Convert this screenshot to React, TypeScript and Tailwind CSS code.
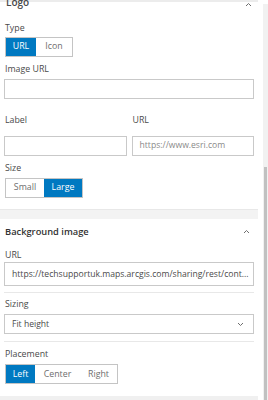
import React from "react";

const font = { fontFamily: '"Open Sans", "Noto Sans", sans-serif' };

function Seg({ items, active, widths }: { items: string[]; active: number; widths: number[] }) {
  return (
    <div className="flex border border-[#c4c4c4] h-[20px] w-fit">
      {items.map((t, i) => (
        <div
          key={t}
          style={{ width: widths[i] }}
          className={
            "flex items-center justify-center text-[8.8px] leading-none " +
            (i === active ? "bg-[#0079c1] text-white" : "bg-white text-[#6e6e6e]")
          }
        >
          {t}
        </div>
      ))}
    </div>
  );
}

function Label({ children }: { children: React.ReactNode }) {
  return <div className="text-[8.8px] leading-[12px] text-[#4a4a4a]">{children}</div>;
}

function Chevron({ up }: { up?: boolean }) {
  return (
    <svg width="7" height="5" viewBox="0 0 7 5" className={up ? "rotate-180" : ""}>
      <path d="M1 1 L3.5 3.5 L6 1" fill="none" stroke="#6e6e6e" strokeWidth="1" />
    </svg>
  );
}

export default function App() {
  return (
    <div style={font} className="w-[268px] h-[400px] overflow-hidden bg-white flex">
      <div className="w-[258px] flex flex-col">
        {/* Logo section */}
        <div className="relative h-[22px] overflow-hidden">
          <div className="absolute left-0 right-0 top-0 h-[2px] bg-[#ececec]" />
          <div className="absolute left-[6px] top-[-4px] text-[10px] leading-[12px] font-semibold text-[#4a4a4a]">Logo</div>
          <div className="absolute right-[6px] top-[2px]">
            <Chevron up />
          </div>
        </div>
        <div className="px-[5px] flex flex-col">
          <Label>Type</Label>
          <div className="mt-[3px]">
            <Seg items={["URL", "Icon"]} active={0} widths={[30, 36]} />
          </div>
          <div className="mt-[6px]"><Label>Image URL</Label></div>
          <div className="mt-[4px] -mx-px h-[20px] border border-[#c9c9c9]" />
          <div className="mt-[15px] flex gap-[5px] -mx-px">
            <div className="flex-1 flex flex-col">
              <div className="pl-px"><Label>Label</Label></div>
              <div className="mt-[10px] h-[20px] border border-[#c9c9c9]" />
            </div>
            <div className="flex-1 flex flex-col">
              <div className="pl-px"><Label>URL</Label></div>
              <div className="mt-[10px] h-[20px] border border-[#c9c9c9] flex items-center pl-[7px] text-[8.6px] text-[#8a8a8a]">
                https://www.esri.com
              </div>
            </div>
          </div>
          <div className="mt-[6px]"><Label>Size</Label></div>
          <div className="mt-[4px]">
            <Seg items={["Small", "Large"]} active={1} widths={[38, 38]} />
          </div>
          <div className="h-[11px]" />
        </div>
        <div className="h-[11px] bg-[#f3f3f3] border-t border-[#e8e8e8]" />
        {/* Background image section */}
        <div className="h-[25px] flex items-center justify-between px-[5px]">
          <div className="text-[9.3px] font-semibold text-[#323232] leading-none">Background image</div>
          <div className="pr-[3px]"><Chevron up /></div>
        </div>
        <div className="px-[5px] flex flex-col">
          <div className="mt-[5px]"><Label>URL</Label></div>
          <div className="mt-[1px] -mx-px h-[24px] border border-[#c9c9c9] flex items-center pl-[7px] text-[8.6px] text-[#4a4a4a] whitespace-nowrap overflow-hidden">
            https://techsupportuk.maps.arcgis.com/sharing/rest/cont...
          </div>
          <div className="mt-[6px] -mx-px h-px bg-[#e8e8e8]" />
          <div className="mt-[5px]"><Label>Sizing</Label></div>
          <div className="mt-[4px] -mx-px h-[20px] border border-[#c9c9c9] flex items-center justify-between pl-[7px] pr-[9px] text-[8.6px] text-[#4a4a4a]">
            <span>Fit height</span>
            <Chevron />
          </div>
          <div className="mt-[7px] -mx-px h-px bg-[#e8e8e8]" />
          <div className="mt-[6px]"><Label>Placement</Label></div>
          <div className="mt-[4px]">
            <Seg items={["Left", "Center", "Right"]} active={0} widths={[29, 45, 37]} />
          </div>
        </div>
        <div className="mt-[12px] h-[4px] bg-[#f0f0f0]" />
      </div>
      <div className="ml-[5px] w-[5px] flex flex-col bg-[#f1f1f1] mt-[4px]">
        <div className="h-[163px]" />
        <div className="flex-1 mx-px bg-[#c1c1c1]" />
      </div>
    </div>
  );
}
